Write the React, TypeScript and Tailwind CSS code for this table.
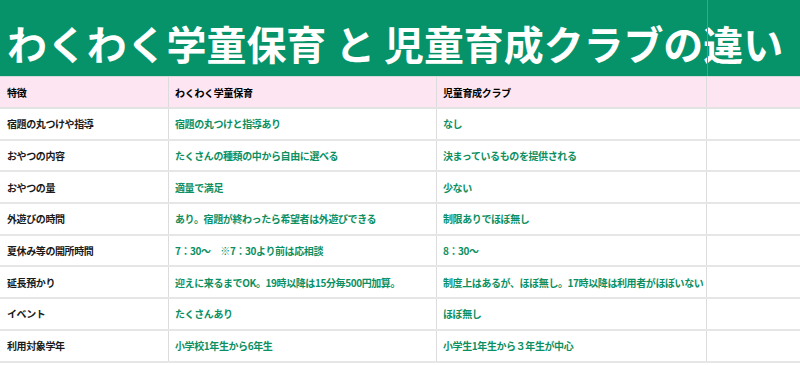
import React from 'react';

type Row = { label: string; waku: string; jido: string };

const ROWS: Row[] = [
  { label: '宿題の丸つけや指導', waku: '宿題の丸つけと指導あり', jido: 'なし' },
  { label: 'おやつの内容', waku: 'たくさんの種類の中から自由に選べる', jido: '決まっているものを提供される' },
  { label: 'おやつの量', waku: '適量で満足', jido: '少ない' },
  { label: '外遊びの時間', waku: 'あり。宿題が終わったら希望者は外遊びできる', jido: '制限ありでほぼ無し' },
  { label: '夏休み等の開所時間', waku: '7：30〜　※7：30より前は応相談', jido: '8：30〜' },
  { label: '延長預かり', waku: '迎えに来るまでOK。19時以降は15分毎500円加算。', jido: '制度上はあるが、ほぼ無し。17時以降は利用者がほぼいない' },
  { label: 'イベント', waku: 'たくさんあり', jido: 'ほぼ無し' },
  { label: '利用対象学年', waku: '小学校1年生から6年生', jido: '小学生1年生から３年生が中心' },
];

const font = "font-['Noto_Sans_CJK_JP','Noto_Sans',sans-serif]";

export default function App() {
  return (
    <div className={`w-[800px] h-[365px] overflow-hidden bg-white ${font}`}>
      {/* Title */}
      <div className="grid grid-cols-[707px_1fr] h-[77px] bg-[#07936a] border-b border-[#d9d9d9]">
        <div className="flex items-center pl-[7px] pt-[10px] whitespace-nowrap">
          <span className="text-white font-bold text-[40px] leading-none tracking-[-0.1px]">
            わくわく学童保育 と 児童育成クラブの違い
          </span>
        </div>
        <div className="border-l border-[#3aa883]" />
      </div>

      {/* Column headings */}
      <div className="grid grid-cols-[169px_268px_270px_1fr] h-[32px] bg-[#fde6f1] border-b-2 border-[#e3e3e3] text-[10px] font-bold text-black tracking-[-0.3px]">
        <div className="flex items-center pl-[7px] border-r border-[#dcdcdc]">特徴</div>
        <div className="flex items-center pl-[6px] border-r border-[#dcdcdc]">わくわく学童保育</div>
        <div className="flex items-center pl-[6px] border-r border-[#dcdcdc]">児童育成クラブ</div>
        <div />
      </div>

      {ROWS.map((r) => (
        <div
          key={r.label}
          className="grid grid-cols-[169px_268px_270px_1fr] h-[31.7px] border-b-2 border-[#e6e6e6] text-[10px] font-semibold tracking-[-0.4px]"
        >
          <div className="flex items-center pl-[7px] border-r border-[#dcdcdc] text-[#1a1a1a]">{r.label}</div>
          <div className="flex items-center pl-[6px] border-r border-[#dcdcdc] text-[#0c9063] whitespace-nowrap">{r.waku}</div>
          <div className="flex items-center pl-[6px] border-r border-[#dcdcdc] text-[#0c9063] whitespace-nowrap">{r.jido}</div>
          <div />
        </div>
      ))}
    </div>
  );
}
